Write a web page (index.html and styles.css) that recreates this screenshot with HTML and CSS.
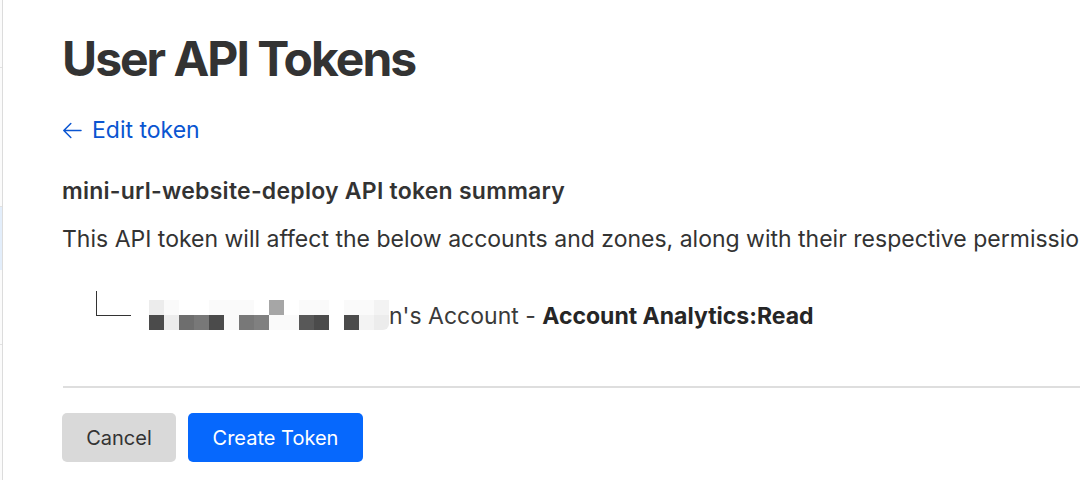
FILE: index.html
```html
<!DOCTYPE html>
<html lang="en">
<head>
<meta charset="utf-8">
<title>User API Tokens</title>
<link rel="stylesheet" href="styles.css">
</head>
<body>
<div class="page">
  <aside class="sidebar">
    <div class="sidebar-seg seg-a"></div>
    <div class="sidebar-seg seg-b"></div>
    <div class="sidebar-seg seg-active"></div>
    <div class="sidebar-seg seg-c"></div>
    <div class="sidebar-seg seg-d"></div>
  </aside>
  <main class="content">
    <h1 class="title">User API Tokens</h1>
    <a class="back-link" href="#">
      <svg class="back-icon" width="20" height="17" viewBox="0 0 20 17" aria-hidden="true">
        <path d="M19 8.5H1.8M8.8 1.5L1.8 8.5L8.8 15.5" fill="none" stroke="currentColor" stroke-width="1.5" stroke-linecap="round" stroke-linejoin="round"/>
      </svg>
      <span>Edit token</span>
    </a>
    <h2 class="summary-title">mini-url-website-deploy API token summary</h2>
    <p class="summary-desc">This API token will affect the below accounts and zones, along with their respective permissions</p>
    <div class="tree-row">
      <span class="tree-branch"></span>
      <span class="redacted" aria-label="redacted">
        <i class="l"></i><i class="w"></i><i class="x"></i><i class="x"></i><i class="w"></i><i class="w"></i><i class="w"></i><i class="x"></i><i class="g"></i><i class="x"></i><i class="w"></i><i class="w"></i><i class="x"></i><i class="w"></i><i class="w"></i><i class="f"></i>
        <i class="k"></i><i class="l"></i><i class="m"></i><i class="m2"></i><i class="k"></i><i class="w"></i><i class="m2"></i><i class="m3"></i><i class="w"></i><i class="w"></i><i class="k2"></i><i class="k"></i><i class="x"></i><i class="k"></i><i class="f"></i><i class="l end"></i>
      </span>
      <span class="account">n's Account - <strong>Account Analytics:Read</strong></span>
    </div>
    <hr class="divider">
    <div class="actions">
      <button class="btn btn-secondary" type="button">Cancel</button>
      <button class="btn btn-primary" type="button">Create Token</button>
    </div>
  </main>
</div>
</body>
</html>
```
FILE: styles.css
```css
* { box-sizing: border-box; }
html, body {
  margin: 0;
  padding: 0;
  background: #ffffff;
  overflow: hidden;
}
body {
  font-family: Inter, "Liberation Sans", sans-serif;
  color: #333333;
  width: 1080px;
  height: 480px;
}
.page {
  display: flex;
  height: 480px;
  overflow: hidden;
}
.sidebar {
  flex: 0 0 3px;
  display: flex;
  flex-direction: column;
  border-right: 1px solid #dcdcdc;
  background: #fbfbfb;
}
.sidebar-seg { border-bottom: 1px solid #e2e2e2; }
.seg-a { height: 68px; }
.seg-b { height: 139px; }
.seg-active { height: 63px; background: #e3eefb; border-bottom: none; }
.seg-c { height: 75px; }
.seg-d { flex: 1; border-bottom: none; }

.content {
  flex: 1;
  min-width: 0;
  padding: 0 0 0 59px;
  white-space: nowrap;
}
.title {
  margin: 0;
  padding-top: 31px;
  font-size: 48px;
  line-height: 56px;
  font-weight: 700;
  letter-spacing: -2px;
  color: #333333;
}
.back-link {
  display: inline-flex;
  align-items: center;
  gap: 10px;
  margin-top: 29px;
  color: #0a55d1;
  text-decoration: none;
  font-size: 23px;
  line-height: 28px;
}
.back-icon { display: block; }
.summary-title {
  margin: 33px 0 0;
  font-size: 23px;
  line-height: 28px;
  font-weight: 600;
  letter-spacing: 0.25px;
  color: #333333;
}
.summary-desc {
  margin: 20px 0 0;
  font-size: 23px;
  line-height: 28px;
  color: #333333;
}
.tree-row {
  display: flex;
  align-items: flex-end;
  margin-top: 37px;
  padding-left: 34px;
  height: 40px;
}
.tree-branch {
  width: 35px;
  height: 25px;
  border-left: 1px solid #333;
  border-bottom: 1px solid #333;
  margin-bottom: 14px;
  flex: 0 0 auto;
}
.redacted {
  display: grid;
  grid-template-columns: repeat(16, 15px);
  grid-template-rows: 15px 15px;
  margin-left: 18px;
  flex: 0 0 auto;
}
.redacted i { display: block; }
.redacted .k { background: #4b4b4b; }
.redacted .k2 { background: #585858; }
.redacted .m { background: #6e6e6e; }
.redacted .m2 { background: #787878; }
.redacted .m3 { background: #808080; }
.redacted .g { background: #a6a6a6; }
.redacted .l { background: #ececec; }
.redacted .f { background: #f3f3f3; }
.redacted .w { background: #fafafa; }
.redacted .x { background: #ffffff; }
.redacted .end { border-radius: 0 0 6px 0; }
.account {
  font-size: 23px;
  line-height: 28px;
  color: #3a3a3a;
}
.account strong { font-weight: 700; color: #262626; }
.divider {
  margin: 56px 0 0 1px;
  border: 0;
  border-top: 2px solid #dedede;
}
.actions {
  display: flex;
  gap: 12px;
  margin-top: 25px;
}
.btn {
  height: 49px;
  border: 0;
  border-radius: 5px;
  font-family: inherit;
  font-size: 20px;
  padding: 0 24px;
  cursor: pointer;
}
.btn-secondary {
  width: 114px;
  background: #d9d9d9;
  color: #333333;
}
.btn-primary {
  width: 175px;
  background: #0668fd;
  color: #ffffff;
}
```
